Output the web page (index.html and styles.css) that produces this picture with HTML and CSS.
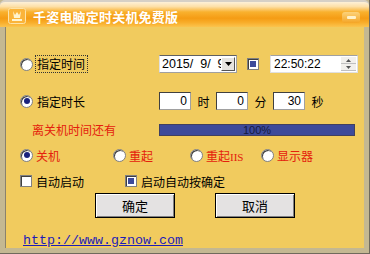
FILE: index.html
```html
<!DOCTYPE html>
<html lang="zh-CN">
<head>
    <meta charset="UTF-8">
    <meta name="viewport" content="width=device-width, initial-scale=1.0">
    <title>千姿电脑定时关机免费版</title>
    <link rel="stylesheet" href="styles.css">
</head>
<body>
    <div class="window">
        <div class="titlebar">
            <span class="app-icon">
                <svg width="18" height="16" viewBox="0 0 18 16">
                    <rect x="0.5" y="0.5" width="17" height="15" rx="2" fill="#fbb43a" stroke="#fde3a6"/>
                    <path d="M5 3 L7 7 L9 4 L11 7 L13 3 L12 10 L6 10 Z" fill="#fff4d0"/>
                    <rect x="4" y="11" width="10" height="2" fill="#fff4d0"/>
                </svg>
            </span>
            <span class="title">千姿电脑定时关机免费版</span>
            <span class="min-btn"><span class="min-dash"></span></span>
        </div>

        <div class="client">
            <div class="row row-time">
                <label class="left-col opt">
                    <span class="radio"></span>
                    <span class="focus-label">指定时间</span>
                </label>
                <div class="combo">
                    <span class="combo-text">2015/&nbsp;&nbsp;9/&nbsp;&nbsp;9</span>
                    <span class="drop-btn">
                        <svg width="7" height="4" viewBox="0 0 7 4"><path d="M0 0 H7 L3.5 4 Z" fill="#000"/></svg>
                    </span>
                </div>
                <span class="check checked small-gap"></span>
                <div class="spin">
                    <span class="spin-text">22:50:22</span>
                    <span class="spin-btns">
                        <span class="spin-up"><svg width="5" height="3" viewBox="0 0 5 3"><path d="M0 3 H5 L2.5 0 Z" fill="#555"/></svg></span>
                        <span class="spin-down"><svg width="5" height="3" viewBox="0 0 5 3"><path d="M0 0 H5 L2.5 3 Z" fill="#555"/></svg></span>
                    </span>
                </div>
            </div>

            <div class="row row-length">
                <label class="left-col opt">
                    <span class="radio checked"></span>
                    <span class="opt-text">指定时长</span>
                </label>
                <div class="fields">
                    <span class="num">0</span><span class="unit">时</span>
                    <span class="num">0</span><span class="unit">分</span>
                    <span class="num">30</span><span class="unit">秒</span>
                </div>
            </div>

            <div class="row row-remain">
                <span class="left-col red remain">离关机时间还有</span>
                <div class="progress">100%</div>
            </div>

            <div class="row row-actions">
                <label class="act act-1 opt"><span class="radio checked"></span><span class="red">关机</span></label>
                <label class="act act-2 opt"><span class="radio"></span><span class="red">重起</span></label>
                <label class="act act-3 opt"><span class="radio"></span><span class="red">重起<span class="iis">IIS</span></span></label>
                <label class="act opt"><span class="radio"></span><span class="red">显示器</span></label>
            </div>

            <div class="row row-checks">
                <label class="chk chk-1"><span class="check"></span>自动启动</label>
                <label class="chk"><span class="check checked"></span>启动自动按确定</label>
            </div>

            <div class="row row-buttons">
                <button class="btn">确定</button>
                <button class="btn">取消</button>
            </div>

            <div class="row row-link">
                <a class="link" href="#">http://www.gznow.com</a>
            </div>
        </div>
    </div>
</body>
</html>
```

FILE: styles.css
```css
:root {
    --frame: #c4b892;
    --yellow: #f1cb5e;
    --red: #e4200c;
    --navy: #1a237e;
    --bar: #3d4a9a;
}

body {
    margin: 0;
    padding: 0;
    background: var(--yellow);
    font-family: "Noto Sans CJK SC", "DejaVu Sans", sans-serif;
    font-size: 12px;
    color: #000;
}

.window {
    width: 370px;
    height: 254px;
    display: flex;
    flex-direction: column;
    background: var(--frame);
    box-sizing: border-box;
    border-right: 1px solid #6f6a5c;
    border-bottom: 1px solid #6f6a5c;
}

.titlebar {
    height: 27px;
    display: flex;
    align-items: center;
    box-sizing: border-box;
    padding: 3px 9px 0 8px;
    border-top: 2px solid #d6d0c6;
    border-radius: 5px 5px 0 0;
    background: linear-gradient(#fdf0d8 0%, #fde0a8 18%, #f9b12e 40%, #f59c14 65%, #f8ad2a 82%, #fbc44e 100%);
}

.app-icon {
    display: flex;
    width: 18px;
    height: 16px;
}

.title {
    margin-left: 7px;
    color: #fff;
    font-weight: bold;
    font-size: 13px;
    letter-spacing: 0.2px;
    text-shadow: 0 0 2px #f6a21c;
}

.min-btn {
    margin-left: auto;
    width: 18px;
    height: 11px;
    margin-top: 3px;
    border-radius: 3px;
    background: linear-gradient(#fcd27a, #f4a526);
    display: flex;
    align-items: center;
    justify-content: center;
}

.min-dash {
    width: 9px;
    height: 3px;
    border-radius: 1px;
    background: #fff1c8;
}

.client {
    flex: 1;
    margin: 0 5px 5px 5px;
    background: var(--yellow);
    border-left: 1px solid #8a826c;
    padding-left: 14px;
    display: flex;
    flex-direction: column;
}

.row {
    display: flex;
    align-items: center;
}

.left-col {
    width: 139px;
    flex-shrink: 0;
}

.opt {
    display: flex;
    align-items: center;
}

.radio {
    width: 13px;
    height: 13px;
    border-radius: 50%;
    box-sizing: border-box;
    background: #fff;
    border: 1px solid #808080;
    box-shadow: inset 1px 1px 0 #404040;
    display: flex;
    align-items: center;
    justify-content: center;
    margin-right: 3px;
    flex-shrink: 0;
}

.radio.checked::after {
    content: "";
    width: 6px;
    height: 6px;
    border-radius: 50%;
    background: var(--navy);
}

.focus-label {
    outline: 1px dotted #333;
    padding: 1px 2px 1px 1px;
    line-height: 14px;
}

.opt-text {
    padding-left: 1px;
}

.red {
    color: var(--red);
}

.row-time {
    margin-top: 28px;
    height: 18px;
}

.combo {
    width: 78px;
    height: 18px;
    box-sizing: border-box;
    background: #fff;
    border: 1px solid #a0a0a0;
    border-top-color: #606060;
    border-left-color: #e0e0e0;
    display: flex;
    align-items: center;
    overflow: hidden;
    font-family: "Liberation Sans", sans-serif;
    font-size: 12.5px;
}

.combo-text {
    flex: 1;
    padding-left: 2px;
    white-space: nowrap;
    overflow: hidden;
}

.drop-btn {
    width: 14px;
    height: 14px;
    margin-right: 1px;
    background: #e6e4e0;
    border: 1px solid #fff;
    border-right-color: #555;
    border-bottom-color: #555;
    box-sizing: border-box;
    display: flex;
    align-items: center;
    justify-content: center;
    flex-shrink: 0;
}

.check {
    width: 12px;
    height: 12px;
    box-sizing: border-box;
    background: #fff;
    border: 1px solid #808080;
    box-shadow: inset 1px 1px 0 #404040;
    display: inline-flex;
    align-items: center;
    justify-content: center;
    flex-shrink: 0;
}

.check.checked::after {
    content: "";
    width: 6px;
    height: 6px;
    background: var(--bar);
}

.small-gap {
    margin-left: 10px;
    margin-right: 11px;
}

.spin {
    width: 88px;
    height: 18px;
    box-sizing: border-box;
    background: #fff;
    border: 1px solid #e0e0e0;
    border-top-color: #a0a0a0;
    display: flex;
    align-items: center;
    font-family: "Liberation Sans", sans-serif;
    font-size: 12px;
}

.spin-text {
    flex: 1;
    padding-left: 3px;
}

.spin-btns {
    width: 15px;
    height: 14px;
    margin-right: 1px;
    display: flex;
    flex-direction: column;
}

.spin-up,
.spin-down {
    flex: 1;
    background: #f2f0ec;
    border-bottom: 1px solid #c0c0c0;
    display: flex;
    align-items: center;
    justify-content: center;
}

.row-length {
    margin-top: 19px;
    height: 18px;
}

.fields {
    display: flex;
    align-items: center;
}

.num {
    width: 32px;
    height: 18px;
    box-sizing: border-box;
    background: #fff;
    border: 1px solid #404040;
    border-right-color: #a0a0a0;
    border-bottom-color: #a0a0a0;
    text-align: right;
    padding-right: 3px;
    line-height: 16px;
    font-family: "Liberation Sans", sans-serif;
    font-size: 12px;
}

.unit {
    width: 25px;
    text-align: center;
}

.row-remain {
    margin-top: 13px;
    height: 13px;
}

.remain {
    padding-left: 12px;
    box-sizing: border-box;
}

.progress {
    width: 196px;
    height: 12px;
    box-sizing: border-box;
    background: var(--bar);
    border: 1px solid #404060;
    color: #141a40;
    font-family: "Liberation Sans", sans-serif;
    font-size: 11px;
    line-height: 10px;
    text-align: center;
}

.row-actions {
    margin-top: 12px;
    height: 14px;
}

.act-1 { width: 93px; }
.act-2 { width: 77px; }
.act-3 { width: 71px; }

.iis {
    font-family: "Liberation Serif", serif;
    font-size: 11px;
}

.row-checks {
    margin-top: 12px;
    height: 14px;
}

.chk {
    display: flex;
    align-items: center;
    gap: 4px;
}

.chk-1 {
    width: 105px;
}

.row-buttons {
    margin-top: 5px;
    padding-left: 75px;
    gap: 40px;
}

.btn {
    width: 80px;
    height: 25px;
    background: #e4e2e2;
    border: 1px solid #000;
    box-shadow: inset 1px 1px 0 #fff, inset -1px -1px 0 #808080;
    font-family: "Noto Sans CJK SC", sans-serif;
    font-size: 13px;
    padding: 0;
    color: #000;
}

.row-link {
    margin-top: 15px;
    padding-left: 3px;
}

.link {
    font-family: "Liberation Mono", monospace;
    font-size: 13.33px;
    color: #1c1cb8;
    text-decoration: underline;
}
```
